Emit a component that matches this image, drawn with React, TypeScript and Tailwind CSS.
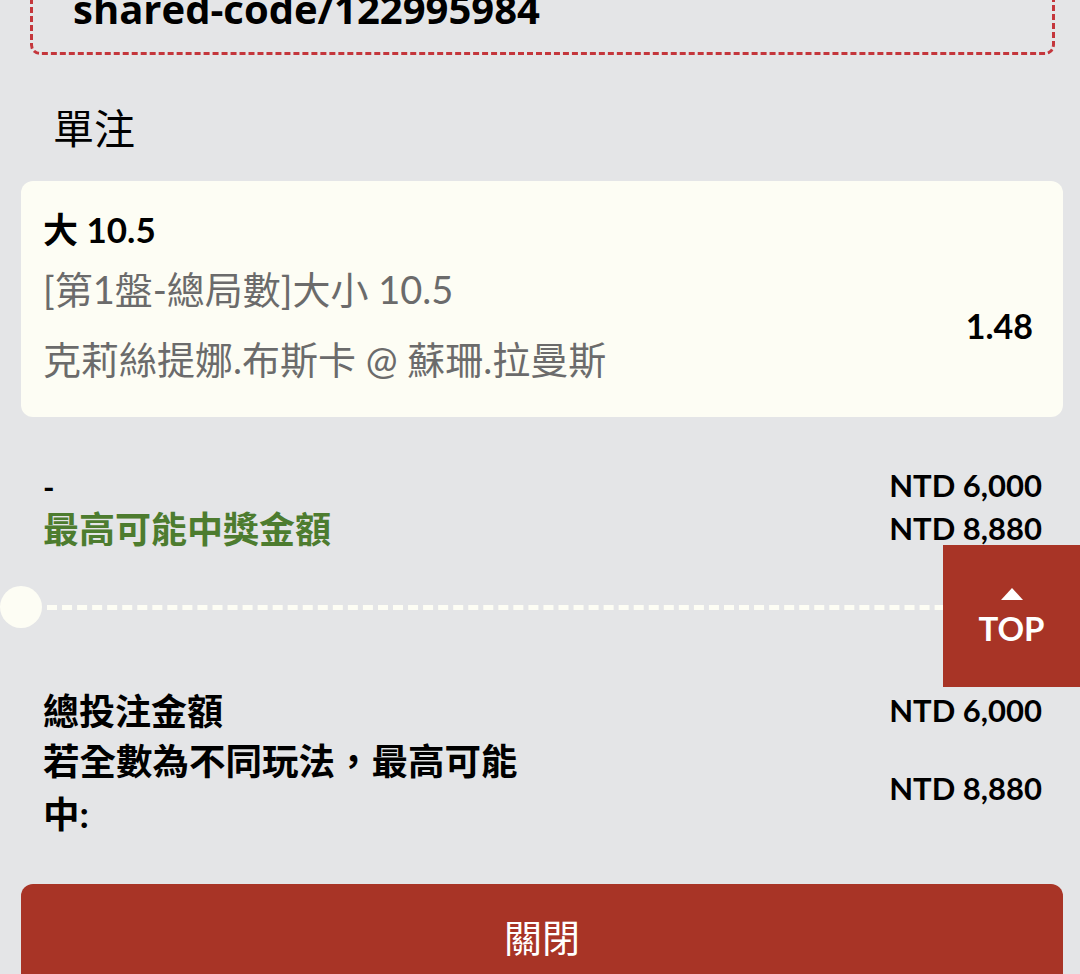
import { useState } from 'react';

const latin = "font-['Lato','Noto_Sans_CJK_TC',sans-serif]";

export default function App() {
  const [stake] = useState(6000);
  const odds = 1.48;
  const win = Math.round(stake * odds);
  const fmt = (n: number) => 'NTD ' + n.toLocaleString('en-US');

  return (
    <div className={`relative w-[1080px] h-[974px] overflow-hidden bg-[#e4e5e7] text-black ${latin}`}>
      {/* Share code box */}
      <div className="-mt-[55px] ml-[30px] mr-[25px] h-[110px] rounded-[10px] border-[3px] border-dashed border-[#c4363c] flex items-end pl-[40px] pb-[24px]">
        <span className="font-['Open_Sans',sans-serif] font-bold text-[40px] leading-[38px]">
          shared-code/122995984
        </span>
      </div>

      {/* Title */}
      <div className="mt-[54px] pl-[53px] text-[41px] leading-[40px]">單注</div>

      {/* Bet card */}
      <div className="mt-[32px] ml-[21px] mr-[17px] h-[236px] rounded-[12px] bg-[#fdfdf4] flex justify-between pl-[22px] pr-[30px]">
        <div className="pt-[26px]">
          <div className="text-[35px] leading-[44px] font-bold">
            大 <span>10.5</span>
          </div>
          <div className="mt-[16px] text-[38px] leading-[44px] text-[#6b6b6b]">[第1盤-總局數]大小 10.5</div>
          <div className="mt-[26px] text-[38px] leading-[44px] text-[#6b6b6b]">克莉絲提娜.布斯卡 @ 蘇珊.拉曼斯</div>
        </div>
        <div className="pt-[125px] text-[34px] leading-[40px] font-bold">{odds.toFixed(2)}</div>
      </div>

      {/* Single summary */}
      <div className="mt-[47px] pl-[43px] pr-[38px] font-bold">
        <div className="flex justify-between items-center h-[43px]">
          <span className="text-[31px] pt-[3px]">-</span>
          <span className="text-[31px]">{fmt(stake)}</span>
        </div>
        <div className="flex justify-between items-center h-[43px]">
          <span className="text-[36px] text-[#4d7c2f]">最高可能中獎金額</span>
          <span className="text-[31px]">{fmt(win)}</span>
        </div>
      </div>

      {/* Separator */}
      <div className="mt-[36px] flex items-center h-[42px]">
        <div className="w-[42px] h-[42px] rounded-full bg-[#fdfdf4] shrink-0" />
        <div className="ml-[5px] flex-1 border-t-[5px] border-dashed border-[#fdfdf4]" />
      </div>

      {/* Totals */}
      <div className="mt-[61px] pl-[43px] pr-[38px] font-bold">
        <div className="flex justify-between items-center h-[43px]">
          <span className="text-[36px]">總投注金額</span>
          <span className="text-[31px]">{fmt(stake)}</span>
        </div>
        <div className="mt-[3px] flex justify-between items-center">
          <span className="w-[495px] text-[36.5px] leading-[53px]">若全數為不同玩法，最高可能中:</span>
          <span className="text-[31px]">{fmt(win)}</span>
        </div>
      </div>

      {/* Close button */}
      <button className="mt-[43px] ml-[21px] w-[1042px] h-[120px] rounded-t-[12px] bg-[#a83426] text-white text-[38px] leading-[38px] flex justify-center pt-[34px]">
        關閉
      </button>

      {/* Back to top */}
      <div className="absolute left-[943px] top-[545px] w-[137px] h-[142px] bg-[#a83426] flex flex-col items-center text-white">
        <svg width="22" height="12" viewBox="0 0 22 12" className="mt-[43px]">
          <polygon points="11,0 22,12 0,12" fill="#ffffff" />
        </svg>
        <span className="mt-[10px] text-[33px] leading-[36px] font-bold">TOP</span>
      </div>
    </div>
  );
}
